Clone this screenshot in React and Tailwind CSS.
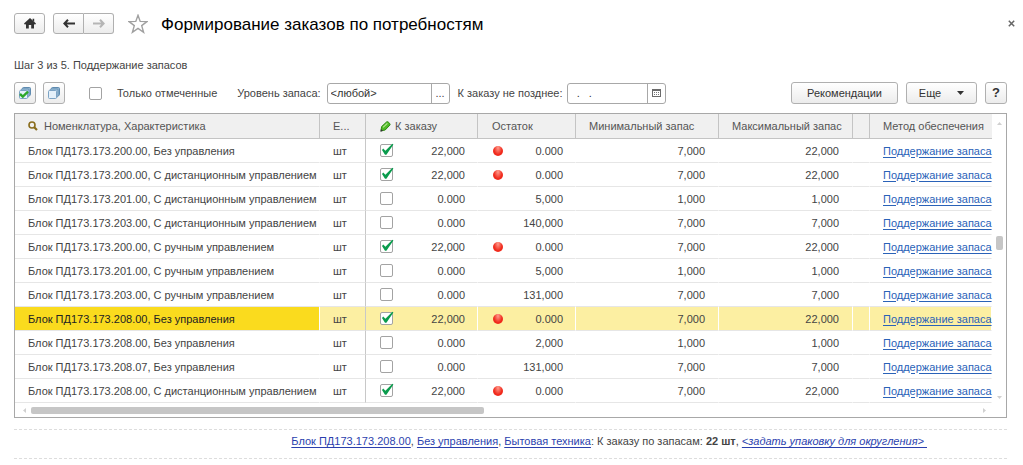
import { useState } from 'react';

const initialRows = [
  { name: 'Блок ПД173.173.200.00, Без управления', checked: true, order: '22,000', low: true, rest: '0.000', min: '7,000', max: '22,000' },
  { name: 'Блок ПД173.173.200.00, С дистанционным управлением', checked: true, order: '22,000', low: true, rest: '0.000', min: '7,000', max: '22,000' },
  { name: 'Блок ПД173.173.201.00, С дистанционным управлением', checked: false, order: '0.000', low: false, rest: '5,000', min: '1,000', max: '1,000' },
  { name: 'Блок ПД173.173.203.00, С дистанционным управлением', checked: false, order: '0.000', low: false, rest: '140,000', min: '7,000', max: '7,000' },
  { name: 'Блок ПД173.173.200.00, С ручным управлением', checked: true, order: '22,000', low: true, rest: '0.000', min: '7,000', max: '22,000' },
  { name: 'Блок ПД173.173.201.00, С ручным управлением', checked: false, order: '0.000', low: false, rest: '5,000', min: '1,000', max: '1,000' },
  { name: 'Блок ПД173.173.203.00, С ручным управлением', checked: false, order: '0.000', low: false, rest: '131,000', min: '7,000', max: '7,000' },
  { name: 'Блок ПД173.173.208.00, Без управления', checked: true, order: '22,000', low: true, rest: '0.000', min: '7,000', max: '22,000' },
  { name: 'Блок ПД173.173.208.00, Без управления', checked: false, order: '0.000', low: false, rest: '2,000', min: '1,000', max: '1,000' },
  { name: 'Блок ПД173.173.208.07, Без управления', checked: false, order: '0.000', low: false, rest: '131,000', min: '7,000', max: '7,000' },
  { name: 'Блок ПД173.173.208.00, С дистанционным управлением', checked: true, order: '22,000', low: true, rest: '0.000', min: '7,000', max: '22,000' },
];

const buttonClass = 'flex items-center justify-center rounded-[3px] border border-[#b0b0b0] bg-linear-to-b from-white to-[#ececec] text-[#333]';

function HomeIcon() {
  return (
    <svg width="12" height="11" viewBox="0 0 12 11" fill="#333">
      <path d="M6 0 L12 5.6 L11 6.8 L10 6 V10.5 H7.2 V7 H4.8 V10.5 H2 V6 L1 6.8 L0 5.6 Z" />
      <path d="M8.6 0.8 H10.2 V4 L8.6 2.5 Z" />
    </svg>
  );
}

function ArrowIcon({ back }) {
  return (
    <svg width="12" height="9" viewBox="0 0 12 9" fill="none" strokeWidth="2" stroke={back ? '#333' : '#b5b5b5'}>
      {back ? <path d="M12 4.5 H1.5 M5 0.8 L1.4 4.5 L5 8.2" /> : <path d="M0 4.5 H10.5 M7 0.8 L10.6 4.5 L7 8.2" />}
    </svg>
  );
}

function StarIcon() {
  return (
    <svg width="20" height="20" viewBox="0 0 20 20" fill="#fff" stroke="#a0a0a0" strokeWidth="1.4">
      <path d="M10 1.3 L12.2 7.4 L19 7.6 L13.7 11.6 L15.6 18.3 L10 14.4 L4.4 18.3 L6.3 11.6 L1 7.6 L7.8 7.4 Z" />
    </svg>
  );
}

function StackIcon({ tick }) {
  return (
    <svg width="14" height="14" viewBox="0 0 14 14">
      <rect x="4.5" y="1.5" width="8" height="8" rx="1" fill="#8fb4d0" stroke="#5f8bb0" />
      <rect x="3" y="3" width="8" height="8" rx="1" fill="#a9c8e0" stroke="#6b95b8" />
      <rect x="1.5" y="4.5" width="8" height="8" rx="1" fill="#e4f0fa" stroke="#7ca3c4" />
      {tick && <path d="M2 8 L4.8 10.6 L10 5.6" fill="none" stroke="#2da829" strokeWidth="2.4" />}
    </svg>
  );
}

function SearchIcon() {
  return (
    <svg width="10" height="10" viewBox="0 0 10 10" fill="none" stroke="#8a6d1d">
      <circle cx="4" cy="4" r="3" strokeWidth="1.6" />
      <path d="M6 6 L9 9" strokeWidth="2.2" />
    </svg>
  );
}

function PencilIcon() {
  return (
    <svg width="11" height="11" viewBox="0 0 11 11">
      <path d="M1 9.8 L1.6 5.6 L6.6 0.9 Q7.4 0.4 8.2 1 L9.8 2.6 Q10.4 3.4 9.8 4.2 L5.2 9 Z" fill="#4fba26" stroke="#2f8a14" />
      <path d="M3 6.4 L7.4 2.4" stroke="#b4ea92" strokeWidth="1.2" />
      <path d="M0.3 10.7 L1 8 L3 10 Z" fill="#333" />
    </svg>
  );
}

function CalendarIcon() {
  return (
    <svg width="9" height="8" viewBox="0 0 9 8" shapeRendering="crispEdges">
      <path d="M0.5 0.5 H8.5 V7.5 H0.5 Z M0 1.5 H9" fill="none" stroke="#6b6b6b" />
      <path d="M2 3h1v1H2z M4 3h1v1H4z M6 3h1v1H6z M2 5h1v1H2z M4 5h1v1H4z M6 5h1v1H6z" fill="#777" />
    </svg>
  );
}

function CheckBox({ checked, onChange, label, id }) {
  return (
    <span className="relative block size-[13px] shrink-0">
      <input
        id={id}
        type="checkbox"
        aria-label={label}
        checked={checked}
        onChange={onChange}
        className="block size-[13px] appearance-none rounded-[2px] border border-[#a3a3a3] bg-white"
      />
      {checked && (
        <svg className="pointer-events-none absolute -top-px left-0" width="14" height="14" viewBox="0 0 14 14">
          <path d="M3.2 5.6 L5.4 7.8 L12.4 0.8 L13.4 1.4 L6.4 11.8 L5 11.8 L2 7 Z" fill="#0a9c4d" />
        </svg>
      )}
    </span>
  );
}

function HeadCell({ children, className = '' }) {
  return (
    <th className={`h-[25px] overflow-hidden border-b border-[#c4c4c4] bg-[#f0f0f0] p-0 text-left font-normal text-[#555] ${className}`}>
      {children}
    </th>
  );
}

function Row({ row, selected, onSelect, onToggle }) {
  const base = 'border-r border-b border-b-[#e6e6e6] py-0';
  const cell = `${base} ${selected ? 'border-r-white bg-[#fcefa2]' : 'border-r-transparent'}`;
  return (
    <tr onClick={onSelect} className="h-6">
      <td className={`${base} pr-0 pl-[13px] ${selected ? 'border-r-white bg-[#fadb1e] text-[#222]' : 'border-r-transparent'}`}>
        {row.name}
      </td>
      <td className={`${base} border-r-[#c8c8c8] pr-0 pl-[13px] ${selected ? 'bg-[#fcefa2]' : ''}`}>шт</td>
      <td className={`${cell} pr-3 pl-3.5`}>
        <div className="flex items-center justify-between">
          <CheckBox checked={row.checked} onChange={onToggle} label={`К заказу: ${row.name}`} />
          {row.order}
        </div>
      </td>
      <td className={`${cell} pr-3 pl-[15px]`}>
        <div className="flex items-center justify-end">
          {row.low && <span className="mr-auto size-2.5 rounded-full bg-radial-[at_50%_20%] from-[#ff9a8c] to-[#f02a1c] to-60%" />}
          {row.rest}
        </div>
      </td>
      <td className={`${cell} pr-[13px] pl-0 text-right`}>{row.min}</td>
      <td className={`${cell} pr-[13px] pl-0 text-right`}>{row.max}</td>
      <td className={`${cell} px-0`}></td>
      <td className={`${cell} pr-0 pl-[13px]`}>
        <a href="#" className="text-[#2a62b8] underline underline-offset-2">Поддержание запаса</a>
      </td>
    </tr>
  );
}

export default function App() {
  const [rows, setRows] = useState(initialRows);
  const [selected, setSelected] = useState(7);
  const [onlyMarked, setOnlyMarked] = useState(false);

  const toggle = (index) => {
    setRows(rows.map((r, i) => (i === index ? { ...r, checked: !r.checked } : r)));
  };

  return (
    <div className="bg-white pt-3 pr-4 pb-1 pl-3.5 font-['Liberation_Sans',Arial,sans-serif] text-[11px] leading-4 text-[#444]">
      {/* Заголовок формы */}
      <header className="flex h-[23px] items-center">
        <button type="button" aria-label="Начальная страница" className={`${buttonClass} h-[21px] w-[31px]`}>
          <HomeIcon />
        </button>
        <div className="ml-2 flex">
          <button type="button" aria-label="Назад" className={`${buttonClass} h-[21px] w-[31px] rounded-r-none`}>
            <ArrowIcon back />
          </button>
          <button type="button" aria-label="Вперед" className={`${buttonClass} h-[21px] w-[30px] rounded-l-none border-l-0`}>
            <ArrowIcon />
          </button>
        </div>
        <button type="button" aria-label="В избранное" className="ml-3.5">
          <StarIcon />
        </button>
        <h1 className="ml-[13px] self-start text-[17px] leading-[26px] text-black">Формирование заказов по потребностям</h1>
        <button type="button" aria-label="Закрыть" className="-mr-2 ml-auto">
          <svg width="7" height="7" viewBox="0 0 7 7" stroke="#666" strokeWidth="1.5">
            <path d="M0.8 0.8 L6.2 6.2 M6.2 0.8 L0.8 6.2" />
          </svg>
        </button>
      </header>

      <p className="mt-[22px]">Шаг 3 из 5. Поддержание запасов</p>

      {/* Командная панель */}
      <div className="mt-[9px] flex h-[22px] items-center">
        <button type="button" aria-label="Отметить все" className={`${buttonClass} size-[22px]`}>
          <StackIcon tick />
        </button>
        <button type="button" aria-label="Снять отметки" className={`${buttonClass} ml-[7px] size-[22px]`}>
          <StackIcon />
        </button>
        <div className="ml-6 flex items-center gap-[15px]">
          <CheckBox id="only-marked" checked={onlyMarked} onChange={() => setOnlyMarked(!onlyMarked)} />
          <label htmlFor="only-marked">Только отмеченные</label>
        </div>
        <label htmlFor="level" className="ml-5">Уровень запаса:</label>
        <div className="ml-1.5 flex h-[21px] w-[123px] rounded-[3px] border border-[#a8a8a8]">
          <input id="level" defaultValue="<любой>" className="w-0 flex-1 px-[3px] text-[#333] outline-none" />
          <button type="button" aria-label="Выбрать" className="w-[18px] border-l border-[#a8a8a8]">...</button>
        </div>
        <label htmlFor="until" className="ml-2">К заказу не позднее:</label>
        <div className="ml-1 flex h-[21px] w-[99px] rounded-[3px] border border-[#a8a8a8]">
          <input id="until" defaultValue="  .   ." className="w-0 flex-1 px-[3px] text-[#333] outline-none" />
          <button type="button" aria-label="Календарь" className="flex w-[18px] items-center justify-center border-l border-[#a8a8a8]">
            <CalendarIcon />
          </button>
        </div>
        <div className="ml-auto flex gap-2">
          <button type="button" className={`${buttonClass} h-[22px] w-[107px]`}>Рекомендации</button>
          <button type="button" className={`${buttonClass} h-[22px] w-[71px] gap-4`}>
            Еще
            <svg width="7" height="4" viewBox="0 0 7 4" fill="#333">
              <path d="M0 0 H7 L3.5 4 Z" />
            </svg>
          </button>
          <button type="button" className={`${buttonClass} size-[22px] text-[13px] font-bold`}>?</button>
        </div>
      </div>

      {/* Таблица потребностей */}
      <div className="mt-[9px] border border-[#a8a8a8]">
        <div className="flex">
          <table className="w-0 flex-1 table-fixed border-separate border-spacing-0 whitespace-nowrap">
            <colgroup>
              <col />
              <col className="w-[46px]" />
              <col className="w-[112px]" />
              <col className="w-[98px]" />
              <col className="w-[143px]" />
              <col className="w-[134px]" />
              <col className="w-[17px]" />
              <col className="w-[122px]" />
            </colgroup>
            <thead>
              <tr>
                <HeadCell className="border-r pl-[13px]">
                  <span className="flex items-center gap-1.5"><SearchIcon />Номенклатура, Характеристика</span>
                </HeadCell>
                <HeadCell className="border-r pl-[13px]">Е...</HeadCell>
                <HeadCell className="border-r pl-3.5">
                  <span className="flex items-center gap-1"><PencilIcon />К заказу</span>
                </HeadCell>
                <HeadCell className="border-r pl-3.5">Остаток</HeadCell>
                <HeadCell className="border-r pl-[13px]">Минимальный запас</HeadCell>
                <HeadCell className="border-r pl-[13px]">Максимальный запас</HeadCell>
                <HeadCell className="border-r" />
                <HeadCell className="pl-[13px]">Метод обеспечения</HeadCell>
              </tr>
            </thead>
            <tbody>
              {rows.map((row, i) => (
                <Row key={i} row={row} selected={i === selected} onSelect={() => setSelected(i)} onToggle={() => toggle(i)} />
              ))}
            </tbody>
          </table>
          <div className="flex w-3.5 flex-col items-center justify-between pt-2 pb-1">
            <svg width="5" height="3" viewBox="0 0 5 3" fill="#d0d0d0"><path d="M0 3 H5 L2.5 0 Z" /></svg>
            <div className="mb-9 h-3.5 w-[7px] rounded-[2px] bg-[#c6c6c6]" />
            <svg width="5" height="3" viewBox="0 0 5 3" fill="#d0d0d0"><path d="M0 0 H5 L2.5 3 Z" /></svg>
          </div>
        </div>
        <div className="flex h-3.5 items-center justify-between pr-5 pl-2">
          <svg width="3" height="5" viewBox="0 0 3 5" fill="#d0d0d0"><path d="M3 0 V5 L0 2.5 Z" /></svg>
          <div className="mr-auto ml-[5px] h-[7px] w-[47%] rounded-[2px] bg-[#c6c6c6]" />
          <svg width="3" height="5" viewBox="0 0 3 5" fill="#d0d0d0"><path d="M0 0 V5 L3 2.5 Z" /></svg>
        </div>
      </div>

      {/* Подвал с текущей строкой */}
      <footer className="mt-[11px] flex h-[30px] justify-end border-y border-dashed border-[#ddd] pt-[3px] pr-20 whitespace-pre">
        <p>
          <a href="#" className="text-[#2b3fae] underline underline-offset-2">Блок ПД173.173.208.00</a>,{' '}
          <a href="#" className="text-[#2b3fae] underline underline-offset-2">Без управления</a>,{' '}
          <a href="#" className="text-[#2b3fae] underline underline-offset-2">Бытовая техника</a>: К заказу по запасам: <b>22 шт</b>,{' '}
          <a href="#" className="text-[#2b3fae] italic underline underline-offset-2">{'<задать упаковку для округления> '}</a>
        </p>
      </footer>
    </div>
  );
}
